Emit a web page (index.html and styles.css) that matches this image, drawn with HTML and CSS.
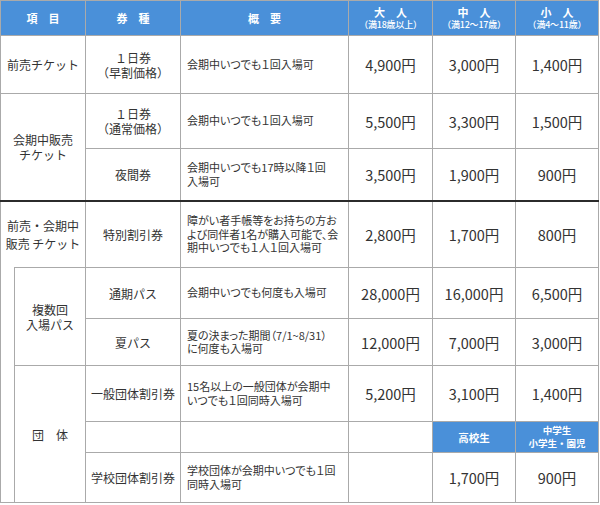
FILE: index.html
```html
<!DOCTYPE html>
<html lang="ja">
<head>
<meta charset="utf-8">
<title>料金表</title>
<link rel="stylesheet" href="styles.css">
</head>
<body>
<table class="price-table">
  <colgroup>
    <col class="c-indent">
    <col class="c-cat">
    <col class="c-type">
    <col class="c-desc">
    <col class="c-adult">
    <col class="c-price">
    <col class="c-price">
  </colgroup>
  <thead>
    <tr class="r-head">
      <th colspan="2" class="hd">項　目</th>
      <th class="hd">券　種</th>
      <th class="hd">概　要</th>
      <th class="hd">大　人<span class="hd-sub">（満18歳以上）</span></th>
      <th class="hd">中　人<span class="hd-sub">（満12～17歳）</span></th>
      <th class="hd">小　人<span class="hd-sub">（満4～11歳）</span></th>
    </tr>
  </thead>
  <tbody>
    <tr class="r1">
      <td colspan="2" class="cat">前売チケット</td>
      <td class="type">１日券<br>（早割価格）</td>
      <td class="desc">会期中いつでも１回入場可</td>
      <td class="price">4,900円</td>
      <td class="price">3,000円</td>
      <td class="price">1,400円</td>
    </tr>
    <tr class="r2">
      <td colspan="2" rowspan="2" class="cat">会期中販売<br>チケット</td>
      <td class="type">１日券<br>（通常価格）</td>
      <td class="desc">会期中いつでも１回入場可</td>
      <td class="price">5,500円</td>
      <td class="price">3,300円</td>
      <td class="price">1,500円</td>
    </tr>
    <tr class="r3">
      <td class="type">夜間券</td>
      <td class="desc">会期中いつでも17時以降１回<br>入場可</td>
      <td class="price">3,500円</td>
      <td class="price">1,900円</td>
      <td class="price">900円</td>
    </tr>
    <tr class="r4">
      <td colspan="2" class="cat cat-open">前売・会期中<br>販売 チケット</td>
      <td class="type">特別割引券</td>
      <td class="desc">障がい者手帳等をお持ちの方お<br>よび同伴者1名が購入可能で、会<br>期中いつでも１人１回入場可</td>
      <td class="price">2,800円</td>
      <td class="price">1,700円</td>
      <td class="price">800円</td>
    </tr>
    <tr class="r5">
      <td rowspan="5" class="indent"></td>
      <td rowspan="2" class="cat">複数回<br>入場パス</td>
      <td class="type">通期パス</td>
      <td class="desc">会期中いつでも何度も入場可</td>
      <td class="price">28,000円</td>
      <td class="price">16,000円</td>
      <td class="price">6,500円</td>
    </tr>
    <tr class="r6">
      <td class="type">夏パス</td>
      <td class="desc">夏の決まった期間（7/1~8/31）<br>に何度も入場可</td>
      <td class="price">12,000円</td>
      <td class="price">7,000円</td>
      <td class="price">3,000円</td>
    </tr>
    <tr class="r7">
      <td rowspan="3" class="cat">団　体</td>
      <td class="type">一般団体割引券</td>
      <td class="desc">15名以上の一般団体が会期中<br>いつでも１回同時入場可</td>
      <td class="price">5,200円</td>
      <td class="price">3,100円</td>
      <td class="price">1,400円</td>
    </tr>
    <tr class="r8">
      <td class="type"></td>
      <td class="desc"></td>
      <td class="price"></td>
      <td class="band">高校生</td>
      <td class="band band-sm">中学生<br>小学生・園児</td>
    </tr>
    <tr class="r9">
      <td class="type">学校団体割引券</td>
      <td class="desc">学校団体が会期中いつでも１回<br>同時入場可</td>
      <td class="price"></td>
      <td class="price">1,700円</td>
      <td class="price">900円</td>
    </tr>
  </tbody>
</table>
</body>
</html>
```

FILE: styles.css
```css
html, body {
  margin: 0;
  padding: 0;
  background: #ffffff;
}

body {
  font-family: "Noto Sans CJK JP", "Noto Sans", sans-serif;
  color: #333333;
}

.price-table {
  border-collapse: collapse;
  table-layout: fixed;
  width: 599px;
}

.c-indent { width: 14px; }
.c-cat { width: 71px; }
.c-type { width: 95px; }
.c-desc { width: 168px; }
.c-adult { width: 84px; }
.c-price { width: 83px; }

.price-table th,
.price-table td {
  border: 1px solid #aaaaaa;
  padding: 0;
  text-align: center;
  vertical-align: middle;
}

.price-table .r-head th { height: 34px; }
.price-table .r1 td { height: 57px; }
.price-table .r2 td { height: 54px; }
.price-table .r3 td { height: 51px; }
.price-table .r4 td { height: 65px; border-top: 2px solid #2b2b2b; }
.price-table .r5 td { height: 50px; }
.price-table .r6 td { height: 46px; }
.price-table .r7 td { height: 55px; }
.price-table .r8 td { height: 30px; }
.price-table .r9 td { height: 49px; }

.price-table .hd {
  background: #4a90d9;
  color: #ffffff;
  font-size: 11px;
  font-weight: 700;
  line-height: 13px;
}

.hd-sub {
  display: block;
  font-size: 9px;
  font-weight: 500;
  line-height: 12px;
  letter-spacing: -0.2px;
}

.price-table .cat {
  font-size: 12px;
  line-height: 15px;
}

.price-table .r4 .cat-open {
  border-bottom: none;
  line-height: 18px;
}

.price-table .r5 .indent {
  border-top: none;
}

.price-table .type {
  font-size: 12px;
  line-height: 15px;
}

.price-table .desc {
  text-align: left;
  padding-left: 6px;
  font-size: 11px;
  line-height: 13.5px;
  font-feature-settings: "palt";
  white-space: nowrap;
}

.price-table .price {
  font-size: 14.5px;
}

.price-table .band {
  background: #4a90d9;
  color: #ffffff;
  font-size: 10.5px;
  font-weight: 700;
}

.price-table .band-sm {
  font-size: 9.5px;
  line-height: 13px;
}
```
